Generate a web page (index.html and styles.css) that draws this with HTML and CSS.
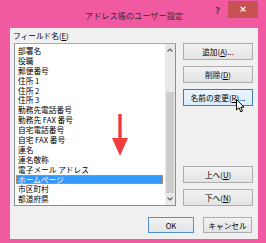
FILE: index.html
```html
<!DOCTYPE html>
<html lang="ja">
<head>
<meta charset="utf-8">
<title>アドレス帳のユーザー設定</title>
<link rel="stylesheet" href="styles.css">
</head>
<body>
<div class="window">
  <div class="titlebar">
    <div></div>
    <div class="title">アドレス帳のユーザー設定</div>
    <div class="controls">
      <span class="help">?</span>
      <span class="close">×</span>
    </div>
  </div>
  <div class="client">
    <div class="label">フィールド名(<u>E</u>)</div>
    <div class="main">
      <div class="listbox">
        <ul class="items">
          <li>部署名</li>
          <li>役職</li>
          <li>郵便番号</li>
          <li>住所 1</li>
          <li>住所 2</li>
          <li>住所 3</li>
          <li>勤務先電話番号</li>
          <li>勤務先 FAX 番号</li>
          <li>自宅電話番号</li>
          <li>自宅 FAX 番号</li>
          <li>連名</li>
          <li>連名敬称</li>
          <li>電子メール アドレス</li>
          <li class="selected">ホームページ</li>
          <li>市区町村</li>
          <li>都道府県</li>
        </ul>
        <div class="scrollbar">
          <div class="sb-arrow">
            <svg width="6" height="4" viewBox="0 0 6 4"><path d="M0.5 3.5 L3 1 L5.5 3.5" fill="none" stroke="#606060" stroke-width="1.2"/></svg>
          </div>
          <div class="sb-track"><div class="sb-thumb"></div></div>
          <div class="sb-arrow">
            <svg width="6" height="4" viewBox="0 0 6 4"><path d="M0.5 0.5 L3 3 L5.5 0.5" fill="none" stroke="#606060" stroke-width="1.2"/></svg>
          </div>
        </div>
        <svg class="red-arrow" width="16" height="42" viewBox="0 0 16 42">
          <rect x="6.3" y="0" width="3.4" height="25" fill="#ef3d3d"/>
          <path d="M0 24 L16 24 L8 42 Z" fill="#ef3d3d"/>
        </svg>
      </div>
      <div class="buttons">
        <button class="btn">追加(<u>A</u>)...</button>
        <button class="btn">削除(<u>D</u>)</button>
        <button class="btn hover">名前の変更(<u>R</u>)...</button>
        <div class="spacer"></div>
        <button class="btn">上へ(<u>U</u>)</button>
        <button class="btn">下へ(<u>N</u>)</button>
      </div>
    </div>
    <div class="footer">
      <button class="btn ok">OK</button>
      <button class="btn cancel">キャンセル</button>
    </div>
  </div>
  <svg class="cursor" width="9" height="14" viewBox="0 0 9 14">
    <path d="M0.5 0.5 L0.5 11 L3 8.7 L4.8 12.8 L6.5 12.1 L4.8 8.2 L8 8.2 Z" fill="#fff" stroke="#000" stroke-width="1" stroke-linejoin="round"/>
  </svg>
</div>
</body>
</html>
```

FILE: styles.css
```css
html, body {
  margin: 0;
  padding: 0;
}
body {
  width: 266px;
  height: 243px;
  overflow: hidden;
  font-family: "Noto Sans CJK JP", "Noto Sans", sans-serif;
  font-size: 7.7px;
  color: #000;
}
.window {
  position: relative;
  width: 266px;
  height: 243px;
  box-sizing: border-box;
  background: #f15aa1;
  padding: 0 8px 4px 10px;
  display: flex;
  flex-direction: column;
}
.titlebar {
  height: 28px;
  flex: none;
  display: grid;
  grid-template-columns: 1fr auto 1fr;
}
.title {
  font-size: 8.2px;
  color: #3a2a33;
  line-height: 10px;
  padding-top: 10px;
  white-space: nowrap;
}
.controls {
  display: flex;
  justify-content: flex-end;
  align-items: flex-start;
}
.help {
  font-family: "DejaVu Sans", sans-serif;
  font-weight: bold;
  font-size: 8px;
  color: #4a3a44;
  line-height: 10px;
  margin-top: 7px;
  margin-right: 8px;
}
.close {
  width: 30px;
  height: 17px;
  margin-top: 1px;
  background: #c85253;
  color: #fff;
  font-family: "DejaVu Sans", sans-serif;
  font-size: 9px;
  font-weight: bold;
  line-height: 17px;
  text-align: center;
}
.client {
  flex: 1;
  background: #f0f0f0;
  padding: 2px 5px 0 3px;
  display: flex;
  flex-direction: column;
}
.label {
  line-height: 11px;
  height: 11px;
}
.main {
  margin-top: 2px;
  margin-left: 1px;
  display: flex;
  gap: 7px;
  height: 163px;
}
.listbox {
  position: relative;
  width: 162px;
  box-sizing: border-box;
  border: 1px solid #8a8e96;
  border-top-color: #a8abb2;
  background: #fff;
  display: flex;
}
.items {
  list-style: none;
  margin: 0;
  padding: 2px 2px 0 1px;
  flex: 1;
  overflow: hidden;
}
.items li {
  height: 9.9px;
  line-height: 9.9px;
  padding-left: 2px;
  white-space: nowrap;
  box-sizing: border-box;
}
.items li.selected {
  background: #3399ff;
  color: #fff;
  border: 1px solid #b98a5e;
  padding-left: 1px;
  line-height: 8px;
}
.scrollbar {
  width: 10px;
  flex: none;
  display: flex;
  flex-direction: column;
  background: #e9e9e9;
}
.sb-arrow {
  height: 12px;
  display: flex;
  align-items: center;
  justify-content: center;
  flex: none;
}
.sb-track {
  flex: 1;
  display: flex;
  flex-direction: column;
  justify-content: flex-end;
}
.sb-thumb {
  height: 101px;
  margin: 0 1px;
  background: #cdcdcd;
}
.red-arrow {
  position: absolute;
  left: 97px;
  top: 70px;
}
.buttons {
  width: 70px;
  display: flex;
  flex-direction: column;
  gap: 6px;
}
.spacer {
  flex: 1;
}
.btn {
  font-family: inherit;
  font-size: 7.7px;
  color: #000;
  height: 17px;
  padding: 0;
  margin: 0;
  border: 1px solid #adadad;
  background: linear-gradient(#f2f2f2, #e3e3e3);
  line-height: 14px;
  box-sizing: border-box;
}
.btn.hover {
  background: linear-gradient(#eaf5fd, #d9ecfb);
  border-color: #3c7fb1;
}
.footer {
  margin-top: 11px;
  padding-right: 1px;
  display: flex;
  justify-content: flex-end;
  gap: 9px;
}
.ok, .cancel {
  height: 16px;
  line-height: 13px;
}
.ok {
  width: 46px;
  border-color: #4f91d3;
}
.cancel {
  width: 49px;
}
.cursor {
  position: absolute;
  left: 236px;
  top: 99px;
}
```
